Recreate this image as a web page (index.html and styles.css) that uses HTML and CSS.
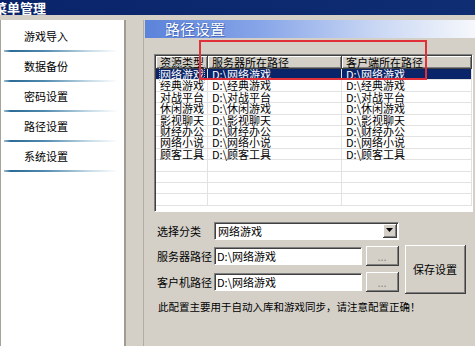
FILE: index.html
```html
<!DOCTYPE html>
<html lang="zh-CN">
<head>
    <meta charset="UTF-8">
    <meta name="viewport" content="width=device-width, initial-scale=1.0">
    <title>菜单管理</title>
    <link rel="stylesheet" href="styles.css">
</head>
<body>
    <div class="titlebar"><span>菜单管理</span></div>

    <div class="main">
        <!-- left menu -->
        <nav class="sidebar">
            <div class="menu-item">游戏导入</div>
            <div class="menu-item">数据备份</div>
            <div class="menu-item">密码设置</div>
            <div class="menu-item">路径设置</div>
            <div class="menu-item">系统设置</div>
        </nav>

        <div class="gutter"></div>

        <!-- path settings page -->
        <section class="panel">
            <div class="panel-head">路径设置</div>

            <div class="list">
                <table class="grid">
                    <colgroup>
                        <col class="col-type">
                        <col class="col-server">
                        <col>
                    </colgroup>
                    <thead>
                        <tr>
                            <th>资源类型</th>
                            <th>服务器所在路径</th>
                            <th>客户端所在路径</th>
                        </tr>
                    </thead>
                    <tbody>
                        <tr class="selected">
                            <td><span class="focus">网络游戏</span></td>
                            <td>D:\网络游戏</td>
                            <td>D:\网络游戏</td>
                        </tr>
                        <tr><td>经典游戏</td><td>D:\经典游戏</td><td>D:\经典游戏</td></tr>
                        <tr><td>对战平台</td><td>D:\对战平台</td><td>D:\对战平台</td></tr>
                        <tr><td>休闲游戏</td><td>D:\休闲游戏</td><td>D:\休闲游戏</td></tr>
                        <tr><td>影视聊天</td><td>D:\影视聊天</td><td>D:\影视聊天</td></tr>
                        <tr><td>财经办公</td><td>D:\财经办公</td><td>D:\财经办公</td></tr>
                        <tr><td>网络小说</td><td>D:\网络小说</td><td>D:\网络小说</td></tr>
                        <tr><td>顾客工具</td><td>D:\顾客工具</td><td>D:\顾客工具</td></tr>
                        <tr class="empty"><td></td><td></td><td></td></tr>
                        <tr class="empty"><td></td><td></td><td></td></tr>
                        <tr class="empty"><td></td><td></td><td></td></tr>
                        <tr class="empty"><td></td><td></td><td></td></tr>
                    </tbody>
                </table>
            </div>

            <div class="form">
                <label class="label">选择分类</label>
                <div class="combo">
                    <span>网络游戏</span>
                    <span class="combo-btn">
                        <svg width="7" height="4" viewBox="0 0 7 4"><path d="M0 0h7L3.5 4z" fill="#000"/></svg>
                    </span>
                </div>

                <label class="label">服务器路径</label>
                <input class="field" type="text" value="D:\网络游戏">
                <button class="dots">...</button>
                <button class="save">保存设置</button>

                <label class="label">客户机路径</label>
                <input class="field" type="text" value="D:\网络游戏">
                <button class="dots">...</button>
            </div>

            <p class="note">此配置主要用于自动入库和游戏同步，请注意配置正确！</p>
        </section>
    </div>

    <!-- red highlight drawn over the list header -->
    <div class="mark"></div>
</body>
</html>
```

FILE: styles.css
```css
body {
    margin: 0;
    background: #d4d0c8;
    font-family: "Noto Sans CJK SC", sans-serif;
    font-size: 11px;
    color: #000;
    overflow: hidden;
}

.titlebar {
    height: 15px;
    background: linear-gradient(to right, #0a246a, #0e2d72);
    color: #fff;
    font-size: 13px;
    font-weight: bold;
    line-height: 15px;
    white-space: nowrap;
    overflow: hidden;
}
.titlebar span {
    display: inline-block;
    margin-left: -6px;
}

.main {
    display: flex;
    height: 331px;
    padding-top: 5px;
    box-sizing: border-box;
}

/* left menu */
.sidebar {
    width: 123px;
    padding-top: 2px;
    background: #fff;
    border-left: 1px solid #a7a39b;
    border-right: 2px solid #a09c94;
}
.menu-item {
    height: 30px;
    line-height: 28px;
    padding-left: 23px;
    background: linear-gradient(to right, #9cc0d4, #2c6b96 6%, #4f89ae 35%, #c5dbe7 75%, #fff) no-repeat 3px 28px / 114px 2px;
}

.gutter {
    width: 17px;
}

/* right page */
.panel {
    flex: 1;
    border-left: 1px solid #b2aea5;
}
.panel-head {
    height: 18px;
    margin-left: 1px;
    padding-left: 20px;
    background: linear-gradient(to right, #5b83da, #87a5e8 35%, #c9d7f4 70%, #f6f8fc);
    color: #fff;
    font-size: 15px;
    line-height: 18px;
    text-shadow: 0 0 1px #2b4d9e, 1px 1px 0 #4e70c4;
}

.list {
    height: 158px;
    margin: 16px 2px 0 10px;
    box-sizing: border-box;
    background: #fff;
    border-top: 1px solid #808080;
    border-left: 1px solid #808080;
    border-right: 1px solid #fff;
    border-bottom: 1px solid #fff;
    box-shadow: inset 1px 1px #404040;
    padding: 1px 0 0 1px;
    overflow: hidden;
}
.grid {
    width: 100%;
    table-layout: fixed;
    border-collapse: separate;
    border-spacing: 0;
}
.col-type {
    width: 52px;
}
.col-server {
    width: 134px;
}
.grid th {
    height: 13px;
    padding: 0 0 0 4px;
    box-sizing: border-box;
    background: #d4d0c8;
    font-weight: normal;
    text-align: left;
    line-height: 12px;
    border-right: 1px solid #404040;
    border-bottom: 1px solid #404040;
    box-shadow: inset 1px 1px #fff, inset -1px -1px #808080;
    white-space: nowrap;
    overflow: hidden;
}
.grid td {
    height: 11.4px;
    padding: 0 0 0 4px;
    box-sizing: border-box;
    line-height: 10.4px;
    border-right: 1px solid #e2e2e2;
    border-bottom: 1px solid #e2e2e2;
    white-space: nowrap;
}
.grid tr.selected td {
    background: #0a246a;
    color: #fff;
}
.focus {
    outline: 1px dotted #b8b8b8;
    outline-offset: 0;
}

/* form below the list */
.form {
    display: grid;
    grid-template-columns: 57px 148px 4px 33px 6px 61px;
    grid-template-rows: 19px 20px 20px;
    row-gap: 6px;
    margin: 9px 0 0 13px;
    align-items: center;
}
.label {
    grid-column: 1;
    white-space: nowrap;
}
.combo {
    grid-column: 2 / 5;
    display: flex;
    align-items: center;
    justify-content: space-between;
    height: 18px;
    box-sizing: border-box;
    padding: 0 1px 0 3px;
    background: #fff;
    border-top: 1px solid #808080;
    border-left: 1px solid #808080;
    border-right: 1px solid #fff;
    border-bottom: 1px solid #fff;
    box-shadow: inset 1px 1px #404040;
}
.combo-btn {
    display: flex;
    align-items: center;
    justify-content: center;
    width: 14px;
    height: 14px;
    box-sizing: border-box;
    background: #d4d0c8;
    border-right: 1px solid #404040;
    border-bottom: 1px solid #404040;
    box-shadow: inset 1px 1px #fff, inset -1px -1px #808080;
}
.field {
    grid-column: 2;
    height: 18px;
    box-sizing: border-box;
    margin: 0;
    padding: 0 0 0 2px;
    font: inherit;
    background: #fff;
    border-top: 1px solid #808080;
    border-left: 1px solid #808080;
    border-right: 1px solid #fff;
    border-bottom: 1px solid #fff;
    box-shadow: inset 1px 1px #404040;
    outline: none;
}
.dots {
    grid-column: 4;
    height: 20px;
    margin: 0;
    padding: 0;
    font: inherit;
    color: #8a8a8a;
    background: #d4d0c8;
    border: none;
    border-right: 1px solid #404040;
    border-bottom: 1px solid #404040;
    box-shadow: inset 1px 1px #fff, inset -1px -1px #808080;
}
.save {
    grid-column: 6;
    grid-row: 2 / 4;
    height: 49px;
    margin: 0;
    padding: 0;
    font: inherit;
    font-size: 11px;
    background: #d4d0c8;
    border: none;
    border-right: 1px solid #404040;
    border-bottom: 1px solid #404040;
    box-shadow: inset 1px 1px #fff, inset -1px -1px #808080;
}

.note {
    margin: 9px 0 0 14px;
    font-size: 10.5px;
    line-height: 12px;
    white-space: nowrap;
}

.mark {
    position: absolute;
    left: 199px;
    top: 40px;
    width: 224px;
    height: 36px;
    border: 2px solid #e0303a;
}
```
